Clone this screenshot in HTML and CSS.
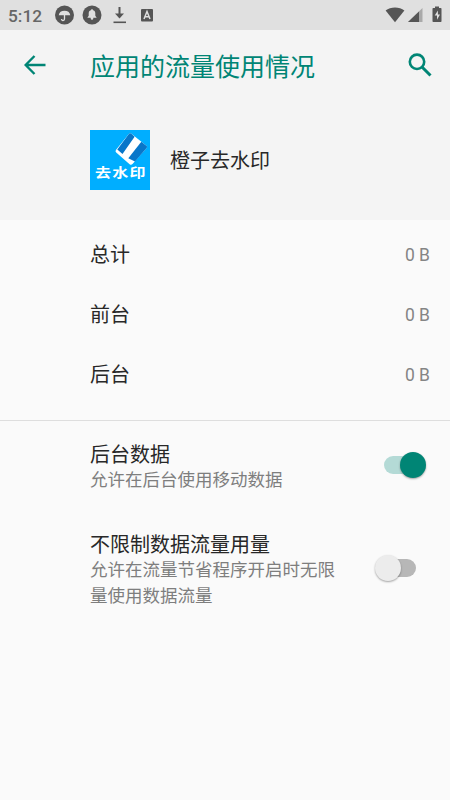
FILE: index.html
```html
<!DOCTYPE html>
<html lang="zh-CN">
<head>
<meta charset="utf-8">
<title>应用的流量使用情况</title>
<link rel="stylesheet" href="styles.css">
</head>
<body>
<div class="status">
  <span class="clock">5:12</span>
  <svg class="status-left" width="104" height="30" viewBox="0 0 104 30">
    <circle cx="10.500" cy="15" r="9.500" fill="#555"/>
    <path d="M4.700 15.200a5.900 5.500 0 0 1 11.600 0z" fill="#e0e0e0"/>
    <path d="M10.500 14v5a1.500 1.500 0 0 1-3 0" fill="none" stroke="#e0e0e0" stroke-width="1.300"/>
    <circle cx="38" cy="15" r="9.500" fill="#555"/>
    <path d="M33.300 17.800h9.400l-1.400-2v-2.500c0-2-1.200-3-2.500-3.400v-.6h-1.600v.6c-1.300.4-2.500 1.400-2.500 3.400v2.500zM36.700 17.800h2.600v.7a1.300 1.300 0 0 1-2.600 0z" fill="#e0e0e0"/>
    <path d="M65.500 7v8" stroke="#555" stroke-width="2"/>
    <path d="M61 13.500h9l-4.500 5z" fill="#555"/>
    <path d="M59.500 22.300h12.500" stroke="#555" stroke-width="1.600"/>
    <rect x="87" y="9" width="12" height="12.500" rx="1" fill="#555"/>
    <path d="M90 19l3-7.500 3 7.500M91 16.700h4" fill="none" stroke="#e0e0e0" stroke-width="1.500"/>
  </svg>
  <svg class="status-right" width="58" height="30" viewBox="0 0 58 30">
    <path d="M.6 10.500C5.500 6.400 14.500 6.400 19.400 10.500L10 22.300z" fill="#555"/>
    <path d="M23 22L37.500 8v14z" fill="#a9a9a9"/>
    <path d="M23 22L34 11.400V22z" fill="#555"/>
    <path d="M48.300 8h1.700V6.500h4V8h1.700q.8 0 .8.800v12.500q0 .8-.8.800h-7.400q-.8 0-.8-.8V8.800q0-.8.8-.8z" fill="#555"/>
    <path d="M52.900 10.500l-3.200 5h2.300v4.200l3-5.200h-2.100z" fill="#e0e0e0"/>
  </svg>
</div>
<header class="bar">
  <svg class="back" width="22" height="22" viewBox="0 0 22 22"><path d="M21.500 11H1.600M10.500 2L1.600 11l8.900 9" fill="none" stroke="#008575" stroke-width="2.400"/></svg>
  <h1>应用的流量使用情况</h1>
  <svg width="26" height="26" viewBox="0 0 26 26"><circle cx="10" cy="9.800" r="7.200" fill="none" stroke="#008575" stroke-width="2.600"/><path d="M15 15l8.500 8.500" stroke="#008575" stroke-width="3"/></svg>
</header>
<section class="app">
  <div class="logo">
    <svg width="60" height="60" viewBox="0 0 60 60">
      <path d="M39.200 3.600q.9-.9 1.900 0L56.700 16q.9.800.1 1.800L42.500 34q-1.300 1.500-2.900.2L26.200 22.600q-1.200-1.200-.3-2.700z" fill="#fff"/>
      <path d="M39.200 3.600q.9-.9 1.900 0L44.600 6.700 32.500 24 27.300 19.400z" fill="#0876c9"/>
      <path d="M51.300 11.800L56.700 16q.9.800.1 1.800L45 31.600 38.300 28.200z" fill="#0876c9"/>
    </svg>
    <span class="logo-text">去水印</span>
  </div>
  <span class="app-name">橙子去水印</span>
</section>
<main>
  <div class="usage">
    <div class="row"><span>总计</span><span class="value">0 B</span></div>
    <div class="row"><span>前台</span><span class="value">0 B</span></div>
    <div class="row"><span>后台</span><span class="value">0 B</span></div>
  </div>
  <div class="setting">
    <div class="copy"><h2>后台数据</h2><p>允许在后台使用移动数据</p></div>
    <div class="switch on"><i class="thumb"></i></div>
  </div>
  <div class="setting second">
    <div class="copy"><h2>不限制数据流量用量</h2><p>允许在流量节省程序开启时无限量使用数据流量</p></div>
    <div class="switch"><i class="thumb"></i></div>
  </div>
</main>
</body>
</html>
```

FILE: styles.css
```css
* { box-sizing: border-box; }
body {
  margin: 0;
  min-height: 800px;
  background: #fafafa;
  color: #282828;
  font-family: Roboto, "Noto Sans CJK SC", sans-serif;
}
h1, h2, p { margin: 0; font-weight: 400; }
svg { display: block; flex: none; }
.status {
  display: flex;
  align-items: center;
  height: 30px;
  padding: 0 7px 0 8px;
  background: #e0e0e0;
}
.clock {
  width: 46px;
  padding-top: 2px;
  font-size: 17.3px;
  line-height: 28px;
  font-weight: 500;
  color: #666;
}
.status-right { margin-left: auto; }
.bar {
  display: flex;
  align-items: center;
  height: 70px;
  padding: 0 17px 0 24px;
  background: #f4f4f4;
  color: #008575;
}
.back { margin-right: 44px; }
h1 { flex: 1; padding-top: 5px; font-size: 25px; line-height: 36px; }
.app {
  display: flex;
  align-items: center;
  gap: 20px;
  height: 120px;
  padding-left: 90px;
  background: #f4f4f4;
}
.logo { position: relative; width: 60px; height: 60px; background: #00aeff; }
.logo-text {
  position: absolute;
  left: 5px;
  top: 33px;
  font-size: 16px;
  line-height: 20px;
  letter-spacing: 1.3px;
  font-weight: 700;
  color: #fff;
  white-space: nowrap;
  transform: scaleY(.8);
}
.app-name { padding-top: 2px; font-size: 20px; line-height: 30px; }
.usage { height: 201px; padding-top: 5px; border-bottom: 1px solid #dedede; }
.row {
  display: flex;
  align-items: center;
  justify-content: space-between;
  height: 60px;
  padding: 0 20px 0 90px;
  font-size: 20px;
  line-height: 30px;
}
.value { font-size: 17.5px; color: #858585; }
.setting {
  display: flex;
  align-items: center;
  justify-content: space-between;
  height: 88px;
  padding: 0 24px 0 90px;
}
.second { height: 118px; }
.copy { width: 254px; padding-top: 6px; }
h2 { font-size: 20px; line-height: 25px; }
.copy p { font-size: 17.5px; line-height: 25.5px; color: #7e7e7e; }
.switch {
  position: relative;
  width: 32px;
  height: 18px;
  margin-right: 10px;
  border-radius: 9px;
  background: #b7b7b7;
}
.thumb {
  position: absolute;
  left: -9px;
  top: -4px;
  width: 26px;
  height: 26px;
  border-radius: 50%;
  background: #ececec;
  box-shadow: 0 1px 2px rgba(0, 0, 0, .35);
}
.switch.on { background: #b4dad6; }
.switch.on .thumb { left: 16px; background: #008575; }
```
